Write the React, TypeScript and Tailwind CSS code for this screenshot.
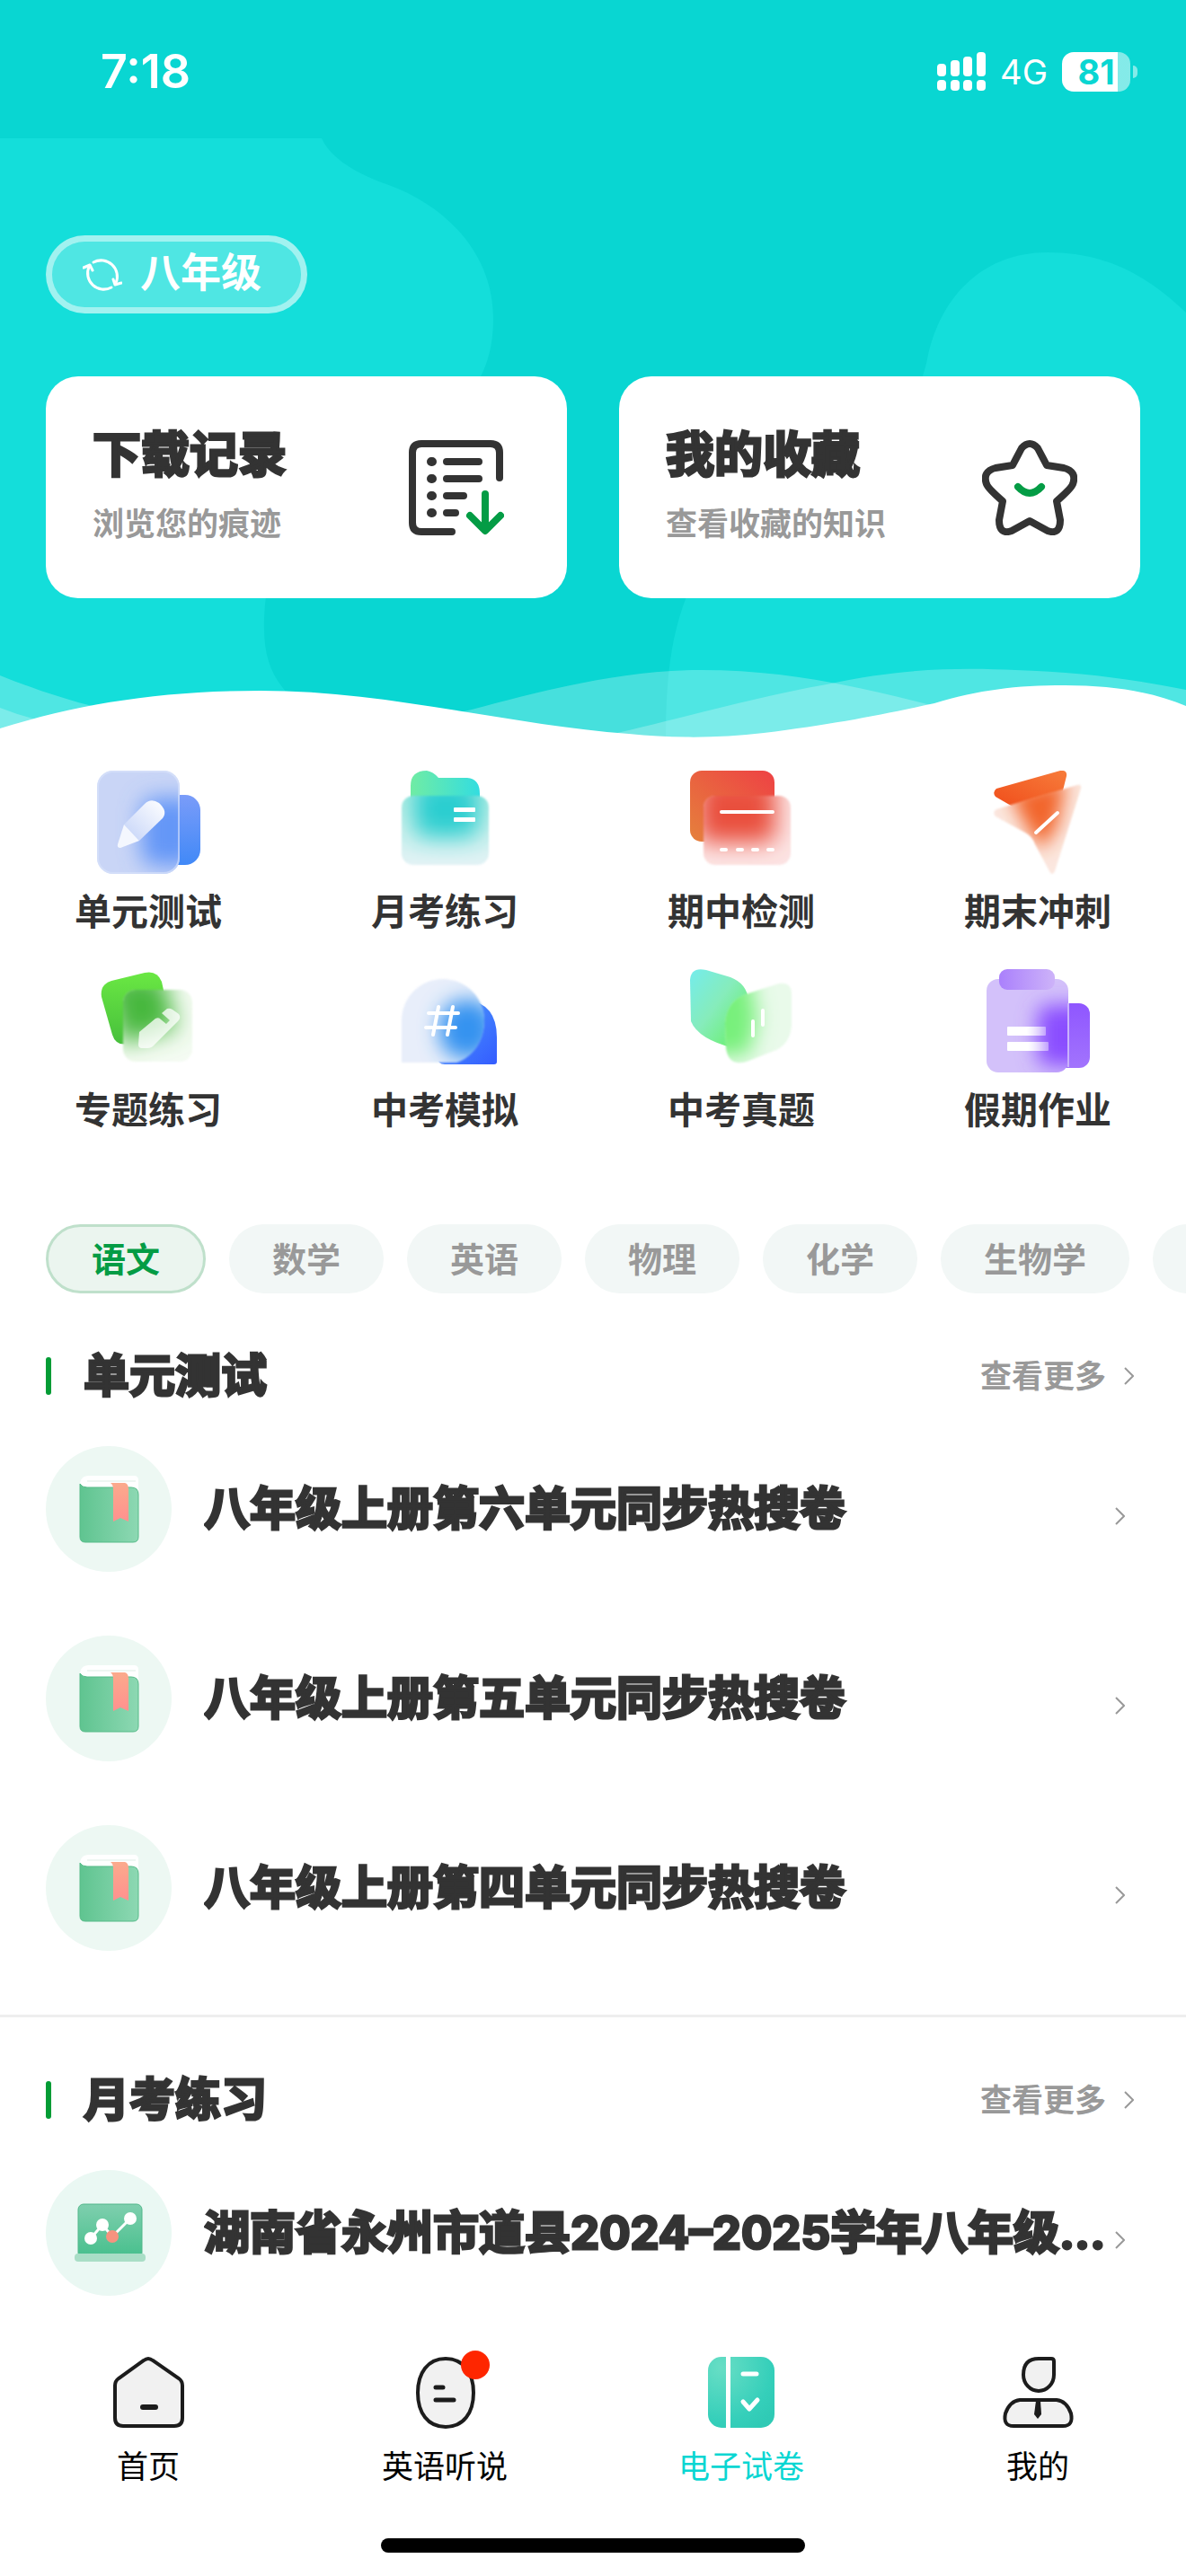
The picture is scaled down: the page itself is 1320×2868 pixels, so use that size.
import React from 'react';

const FONT = "font-['Inter','Noto_Sans_CJK_SC',sans-serif]";
const HEAVY = 'font-bold text-[#333] [-webkit-text-stroke:3px_#333]';

const HeroBackground = () => (
  <svg
    className="absolute inset-0 w-full h-full"
    viewBox="0 0 1320 822"
    preserveAspectRatio="none"
    aria-hidden="true"
  >
    <rect width="1320" height="822" fill="#09d6d2" />
    <path
      d="M0 154H358C366 172 388 190 430 205C500 230 549 285 549 355C549 470 450 480 380 530C310 580 294 640 294 700C294 735 305 757 323 775L0 822Z"
      fill="#14deda"
    />
    <path
      d="M1320 348C1280 310 1235 281 1166 281C1090 281 1045 335 1032 400C1005 530 840 540 780 630C750 685 741 740 741 822H1320Z"
      fill="#14deda"
    />
    <path
      d="M0 752C35 766 70 778 110 788C250 822 390 822 525 790C600 770 690 746 780 746C880 746 960 766 1040 786L1320 822H0Z"
      fill="#fff"
      fillOpacity="0.25"
    />
    <path
      d="M0 788Q20 796 40 801L300 822H660C760 800 830 778 920 762C1010 742 1080 744 1130 746C1200 748 1260 756 1320 768V822H0Z"
      fill="#fff"
      fillOpacity="0.25"
    />
    <path
      d="M0 811C90 783 180 769 290 769C430 769 560 806 700 817C750 822 800 822 850 816C930 806 980 796 1040 783C1090 768 1130 763 1185 763C1240 763 1285 771 1320 786V822H0Z"
      fill="#fff"
    />
  </svg>
);

const StatusBar = () => (
  <div className="relative flex items-center justify-between h-[154px] pl-[112px] pr-[54px] pt-[6px] text-white">
    <span className="text-[52px] leading-[56px] font-semibold">7:18</span>
    <div className="flex items-center">
      <svg className="w-[54px] h-[44px]" viewBox="0 0 54 44" fill="#fff" aria-hidden="true">
        <rect x="0" y="13" width="10" height="14" rx="4" />
        <rect x="15" y="9" width="10" height="18" rx="4" />
        <rect x="29" y="5" width="10" height="22" rx="4" />
        <rect x="44" y="0" width="10" height="27" rx="4" />
        <rect x="0" y="31" width="10" height="12" rx="4" />
        <rect x="15" y="31" width="10" height="12" rx="4" />
        <rect x="29" y="31" width="10" height="12" rx="4" />
        <rect x="44" y="31" width="10" height="12" rx="4" />
      </svg>
      <span className="ml-4 text-[38px] leading-[44px]">4G</span>
      <div className="ml-4 flex items-center">
        <div className="w-[76px] h-[44px] rounded-[13px] flex items-center justify-center bg-linear-to-r from-white from-82% to-white/50 to-82%">
          <span className="text-[38px] leading-[44px] font-bold text-[#09d6d2]">81</span>
        </div>
        <div className="ml-[3px] w-[5px] h-[14px] rounded-r-full bg-white/50" />
      </div>
    </div>
  </div>
);

const DownloadIcon = () => (
  <svg className="w-[106px] h-[106px]" viewBox="0 0 106 106" fill="none" strokeLinecap="round" strokeLinejoin="round" aria-hidden="true">
    <path d="M101 42V14Q101 4 91 4H14Q4 4 4 14V92Q4 102 14 102H48" stroke="#333" strokeWidth="8" />
    <path d="M25 24h1M25 43h1M25 62h1M25 81h1" stroke="#333" strokeWidth="10" />
    <path d="M42 24H78M42 43H78M42 62H61M42 81H52" stroke="#333" strokeWidth="8" />
    <path d="M85 60V100M68 84L85 101L102 84" stroke="#049c45" strokeWidth="8" />
  </svg>
);

const StarIcon = () => (
  <svg className="w-[106px] h-[106px]" viewBox="0 0 106 106" fill="none" strokeLinecap="round" strokeLinejoin="round" aria-hidden="true">
    <path
      d="M44 9Q53 -1 62 9L72 28L91 31Q106 35 101 49Q99 54 83 68L87 89Q87 106 73 101L53 90L33 101Q19 106 19 89L23 68Q7 54 5 49Q0 35 15 31L34 28Z"
      stroke="#333"
      strokeWidth="8"
    />
    <path d="M40 52Q53 66 66 52" stroke="#049c45" strokeWidth="8" />
  </svg>
);

const ICON_CLASS = 'w-[116px] h-[116px]';

const UnitTestIcon = () => (
  <svg className={ICON_CLASS} viewBox="0 0 116 116" aria-hidden="true">
    <defs>
      <linearGradient id="ut-back" x1="0" y1="0" x2="0" y2="1">
        <stop offset="0" stopColor="#7a9cf9" />
        <stop offset="1" stopColor="#4189f7" />
      </linearGradient>
      <linearGradient id="ut-pen" x1="1" y1="0" x2="0" y2="1">
        <stop offset="0" stopColor="#fff" />
        <stop offset="1" stopColor="#c3d2f8" />
      </linearGradient>
      <clipPath id="ut-clip"><rect x="1" y="0" width="92" height="115" rx="18" /></clipPath>
      <filter id="ut-blur" x="-50%" y="-50%" width="200%" height="200%"><feGaussianBlur stdDeviation="12" /></filter>
    </defs>
    <rect x="50" y="27" width="66" height="78" rx="17" fill="url(#ut-back)" />
    <rect x="1" y="0" width="92" height="115" rx="18" fill="#c9d5f6" />
    <g clipPath="url(#ut-clip)">
      <rect x="50" y="30" width="64" height="76" rx="16" fill="#5a90f7" fillOpacity="0.9" filter="url(#ut-blur)" />
    </g>
    <rect x="2" y="1" width="90" height="113" rx="17" fill="none" stroke="#dbe4fb" strokeOpacity="0.6" strokeWidth="2" />
    <path d="M31 60L54 37Q61 30 70 36Q80 45 74 53L48 78Z" fill="url(#ut-pen)" />
    <path d="M31 60L48 78L27 86Q23 86 24 82Z" fill="#f4f7fe" />
  </svg>
);

const MonthlyIcon = () => (
  <svg className={ICON_CLASS} viewBox="0 0 116 116" aria-hidden="true">
    <defs>
      <linearGradient id="mo-back" x1="0" y1="0" x2="1" y2="0">
        <stop offset="0" stopColor="#70eca4" />
        <stop offset="1" stopColor="#33dde0" />
      </linearGradient>
      <linearGradient id="mo-front" x1="0" y1="0" x2="0" y2="1">
        <stop offset="0" stopColor="#a5ecdc" />
        <stop offset="1" stopColor="#e9f3f8" />
      </linearGradient>
      <clipPath id="mo-clip"><rect x="10" y="28" width="97" height="77" rx="13" /></clipPath>
      <filter id="mo-blur" x="-50%" y="-50%" width="200%" height="200%"><feGaussianBlur stdDeviation="13" /></filter>
    </defs>
    <path d="M20 40V17Q20 0 38 0Q45 1 51 8H83Q97 9 97 26V40Z" fill="url(#mo-back)" />
    <g className="blur-[1px]">
      <g clipPath="url(#mo-clip)">
        <rect width="116" height="116" fill="url(#mo-front)" />
        <rect x="24" y="10" width="72" height="64" rx="14" fill="#2cced0" filter="url(#mo-blur)" />
      </g>
    </g>
    <rect x="68" y="41" width="24" height="5" rx="1" fill="#fff" />
    <rect x="68" y="52" width="24" height="5" rx="1" fill="#fff" />
  </svg>
);

const MidtermIcon = () => (
  <svg className={ICON_CLASS} viewBox="0 0 116 116" aria-hidden="true">
    <defs>
      <linearGradient id="mt-back" x1="0" y1="1" x2="1" y2="0">
        <stop offset="0" stopColor="#e5813c" />
        <stop offset="1" stopColor="#ee4144" />
      </linearGradient>
      <clipPath id="mt-clip"><rect x="16" y="28" width="97" height="77" rx="13" /></clipPath>
      <filter id="mt-blur" x="-50%" y="-50%" width="200%" height="200%"><feGaussianBlur stdDeviation="13" /></filter>
    </defs>
    <rect x="1" y="0" width="94" height="79" rx="13" fill="url(#mt-back)" />
    <g className="blur-[1px]">
      <g clipPath="url(#mt-clip)">
        <rect width="116" height="116" fill="#fce4e4" />
        <rect x="10" y="8" width="86" height="72" rx="12" fill="#e94f3e" filter="url(#mt-blur)" />
      </g>
    </g>
    <rect x="34" y="44" width="61" height="4" rx="2" fill="#fff" />
    <path d="M36 88h5M54 88h5M71 88h5M88 88h5" stroke="#fff" strokeWidth="4" strokeLinecap="round" />
  </svg>
);

const FinalIcon = () => (
  <svg className={ICON_CLASS} viewBox="0 0 116 116" aria-hidden="true">
    <defs>
      <linearGradient id="fi-back" x1="0" y1="1" x2="1" y2="0">
        <stop offset="0" stopColor="#f04e1b" />
        <stop offset="1" stopColor="#f77c3b" />
      </linearGradient>
      <clipPath id="fi-clip"><path d="M12 43L102 16Q107 15 106 20L77 112Q74 118 71 112L55 82Q52 73 44 69L11 51Q7 46 12 43Z" /></clipPath>
      <filter id="fi-blur" x="-50%" y="-50%" width="200%" height="200%"><feGaussianBlur stdDeviation="10" /></filter>
    </defs>
    <path d="M12 20L83 0Q91 -1 90 6L84 30L30 40L11 29Q7 24 12 20Z" fill="url(#fi-back)" />
    <g className="blur-[1px]">
      <g clipPath="url(#fi-clip)">
        <rect width="116" height="116" fill="#fbe7df" />
        <path d="M26 24L90 10L80 62L62 88L44 60Z" fill="#f2652a" filter="url(#fi-blur)" />
      </g>
    </g>
    <path d="M80 47L56 69" stroke="#fff" strokeWidth="4" strokeLinecap="round" />
  </svg>
);

const TopicIcon = () => (
  <svg className={ICON_CLASS} viewBox="0 0 116 116" aria-hidden="true">
    <defs>
      <linearGradient id="to-back" x1="0" y1="0" x2="0" y2="1">
        <stop offset="0" stopColor="#6ae843" />
        <stop offset="1" stopColor="#47bf3c" />
      </linearGradient>
      <clipPath id="to-clip"><rect x="30" y="23" width="77" height="80" rx="14" /></clipPath>
      <filter id="to-blur" x="-50%" y="-50%" width="200%" height="200%"><feGaussianBlur stdDeviation="13" /></filter>
    </defs>
    <path d="M17 13L54 4Q68 1 73 14L82 56Q84 68 74 72L36 83Q22 86 18 73L6 31Q4 17 17 13Z" fill="url(#to-back)" />
    <g className="blur-[1px]">
      <g clipPath="url(#to-clip)">
        <rect width="116" height="116" fill="#f4fbf2" />
        <path d="M10 10L74 6L90 66L28 84Z" fill="#46b83c" filter="url(#to-blur)" />
      </g>
    </g>
    <path d="M48 70L66 55Q70 53 72 56L78 61L82 57L73 49L79 44Q82 43 85 45L92 50Q95 54 91 58L65 84Q62 88 57 88H51Q47 88 47 84Z" fill="#fff" fillOpacity="0.75" />
  </svg>
);

const MockIcon = () => (
  <svg className={ICON_CLASS} viewBox="0 0 116 116" aria-hidden="true">
    <defs>
      <linearGradient id="mk-back" x1="0" y1="0" x2="1" y2="1">
        <stop offset="0" stopColor="#4da0fc" />
        <stop offset="1" stopColor="#345cff" />
      </linearGradient>
      <clipPath id="mk-clip"><path d="M10 104V57A46 46 0 0 1 102 57C102 80 89 98 71 104Z" /></clipPath>
      <filter id="mk-blur" x="-50%" y="-50%" width="200%" height="200%"><feGaussianBlur stdDeviation="11" /></filter>
    </defs>
    <path d="M50 75Q50 36 82 34Q116 38 116 76V103Q116 106 113 106H58Q50 106 50 98Z" fill="url(#mk-back)" />
    <g className="blur-[1px]">
      <g clipPath="url(#mk-clip)">
        <rect width="116" height="116" fill="#e8eefa" />
        <rect x="52" y="34" width="62" height="66" rx="28" fill="#3493f0" filter="url(#mk-blur)" />
      </g>
    </g>
    <path d="M51 42L45 73M67 42L61 73M40 49H73M37 65H70" stroke="#fff" strokeWidth="4" strokeLinecap="round" />
  </svg>
);

const RealExamIcon = () => (
  <svg className={ICON_CLASS} viewBox="0 0 116 116" aria-hidden="true">
    <defs>
      <linearGradient id="re-back" x1="0" y1="0" x2="1" y2="1">
        <stop offset="0" stopColor="#74ecec" />
        <stop offset="0.45" stopColor="#86ecbb" />
        <stop offset="1" stopColor="#62f158" />
      </linearGradient>
      <clipPath id="re-clip"><path d="M40 60Q42 34 66 27L100 16Q114 14 114 28V62Q113 82 97 90L64 103Q44 109 41 88Z" /></clipPath>
      <filter id="re-blur" x="-50%" y="-50%" width="200%" height="200%"><feGaussianBlur stdDeviation="11" /></filter>
    </defs>
    <path d="M1 12Q2 -3 19 1L46 9Q64 16 66 34V76Q64 88 50 88Q10 78 2 58Z" fill="url(#re-back)" />
    <g className="blur-[1px]">
      <g clipPath="url(#re-clip)">
        <rect width="116" height="116" fill="#e9faea" />
        <path d="M0 0L66 0L76 56L66 96L0 96Z" fill="#78f07c" filter="url(#re-blur)" />
      </g>
    </g>
    <path d="M71 58V74M82 46V62" stroke="#fff" strokeWidth="4" strokeLinecap="round" />
  </svg>
);

const HolidayIcon = () => (
  <svg className={ICON_CLASS} viewBox="0 0 116 116" aria-hidden="true">
    <defs>
      <linearGradient id="ho-tab" x1="0" y1="0" x2="1" y2="0">
        <stop offset="0" stopColor="#aa80fc" />
        <stop offset="1" stopColor="#cdb3f9" />
      </linearGradient>
      <linearGradient id="ho-back" x1="0" y1="0" x2="0" y2="1">
        <stop offset="0" stopColor="#8f56ff" />
        <stop offset="1" stopColor="#a274fd" />
      </linearGradient>
      <linearGradient id="ho-line" x1="0" y1="0" x2="1" y2="0">
        <stop offset="0.5" stopColor="#fff" />
        <stop offset="1" stopColor="#fff" stopOpacity="0.4" />
      </linearGradient>
      <clipPath id="ho-clip"><rect x="1" y="11" width="91" height="104" rx="13" /></clipPath>
      <filter id="ho-blur" x="-50%" y="-50%" width="200%" height="200%"><feGaussianBlur stdDeviation="11" /></filter>
    </defs>
    <rect x="50" y="38" width="66" height="72" rx="12" fill="url(#ho-back)" />
    <rect x="1" y="11" width="91" height="104" rx="13" fill="#d3c1fa" />
    <g clipPath="url(#ho-clip)">
      <rect x="58" y="40" width="66" height="68" rx="12" fill="#8a4dff" filter="url(#ho-blur)" />
    </g>
    <rect x="91" y="38" width="2" height="71" fill="#c9b2fb" />
    <rect x="15" y="0" width="62" height="23" rx="9" fill="url(#ho-tab)" />
    <rect x="24" y="64" width="43" height="10" rx="1" fill="url(#ho-line)" />
    <rect x="24" y="81" width="46" height="10" rx="1" fill="url(#ho-line)" />
  </svg>
);

const BookIcon = () => (
  <svg className="w-[140px] h-[140px] shrink-0" viewBox="0 0 140 140" aria-hidden="true">
    <defs>
      <linearGradient id="bk-cover" x1="0" y1="0" x2="1" y2="0">
        <stop offset="0" stopColor="#5fc490" />
        <stop offset="1" stopColor="#8dd8b3" />
      </linearGradient>
      <linearGradient id="bk-ribbon" x1="0" y1="0" x2="0" y2="1">
        <stop offset="0" stopColor="#fbaa8c" />
        <stop offset="1" stopColor="#ff918f" />
      </linearGradient>
    </defs>
    <circle cx="70" cy="70" r="70" fill="#edf8f3" />
    <path d="M38 44Q38 33 48 33H98Q103 33 103 38V52H38Z" fill="#fff" />
    <path d="M46 39H100" stroke="#eef6f2" strokeWidth="2" />
    <path d="M38 42Q40 46 46 46H95Q103 46 103 54V101Q103 107 97 107H44Q38 107 38 101Z" fill="url(#bk-cover)" stroke="#56bb88" strokeWidth="1" />
    <path d="M72 41H88Q92 42 92 48V84L83 80L75 84V48Q75 43 72 41Z" fill="url(#bk-ribbon)" />
  </svg>
);

const ChartIcon = () => (
  <svg className="w-[140px] h-[140px] shrink-0" viewBox="0 0 140 140" aria-hidden="true">
    <defs>
      <linearGradient id="ch-screen" x1="0" y1="0" x2="0" y2="1">
        <stop offset="0" stopColor="#7fcfae" />
        <stop offset="1" stopColor="#46bf8c" />
      </linearGradient>
    </defs>
    <circle cx="70" cy="70" r="70" fill="#eaf8f3" />
    <rect x="36" y="38" width="71" height="60" rx="6" fill="url(#ch-screen)" stroke="#52b78a" strokeWidth="1" />
    <rect x="32" y="93" width="79" height="9" rx="4" fill="#a9dec6" />
    <path d="M50 76L63 61L74 74L94 54" fill="none" stroke="#fff" strokeWidth="3" />
    <circle cx="50" cy="76" r="7" fill="#fff" />
    <circle cx="63" cy="61" r="7" fill="#fff" />
    <circle cx="74" cy="74" r="7" fill="#f7937f" />
    <circle cx="94" cy="54" r="7" fill="#fff" />
  </svg>
);

const Chevron = () => (
  <svg className="w-[11px] h-[20px] shrink-0" viewBox="0 0 11 20" fill="none" aria-hidden="true">
    <path d="M1 1L10 10L1 19" stroke="#999" strokeWidth="2" />
  </svg>
);

const NAV_ICON = 'w-[80px] h-[80px] overflow-visible';

const HomeIcon = () => (
  <svg className={NAV_ICON} viewBox="0 0 80 80" fill="none" aria-hidden="true">
    <path
      d="M35 4Q40 0 45 4L74 24Q78 27 78 32V68Q78 77 69 77H12Q3 77 3 68V32Q3 27 7 24Z"
      fill="#f1f1f1"
      stroke="#1c1c1c"
      strokeWidth="4"
    />
    <path d="M34 56H48" stroke="#1c1c1c" strokeWidth="6" strokeLinecap="round" />
  </svg>
);

const ListenIcon = () => (
  <svg className={NAV_ICON} viewBox="0 0 80 80" fill="none" aria-hidden="true">
    <path
      d="M41 2C61 2 72 18 72 40S61 78 41 78S10 62 10 40S21 2 41 2Z"
      fill="#f1f1f1"
      stroke="#1c1c1c"
      strokeWidth="4"
    />
    <path d="M30 34H38M30 48H50" stroke="#1c1c1c" strokeWidth="5" strokeLinecap="round" />
    <circle cx="74" cy="9" r="16" fill="#fe2600" />
  </svg>
);

const PaperIcon = () => (
  <svg className={NAV_ICON} viewBox="0 0 80 80" fill="none" aria-hidden="true">
    <defs>
      <radialGradient id="pp" cx="0.2" cy="0.15" r="1">
        <stop offset="0" stopColor="#68dec5" />
        <stop offset="0.75" stopColor="#35cfba" />
        <stop offset="1" stopColor="#2fcab5" />
      </radialGradient>
    </defs>
    <rect x="3" y="0" width="74" height="79" rx="15" fill="url(#pp)" />
    <rect x="23" y="-1" width="5" height="81" fill="#fff" />
    <path d="M42 19H57M42 50L49 58L58 48" stroke="#fff" strokeWidth="5" strokeLinecap="round" strokeLinejoin="round" />
  </svg>
);

const MineIcon = () => (
  <svg className={NAV_ICON} viewBox="0 0 80 80" fill="none" aria-hidden="true">
    <path d="M41 2H55Q58 2 58 5V20A17 18 0 0 1 24 20Q24 2 41 2Z" fill="#f1f1f1" stroke="#1c1c1c" strokeWidth="4" />
    <path d="M20 48H61Q72 49 77 63Q80 77 68 77H13Q1 77 4 63Q9 49 20 48Z" fill="#f1f1f1" stroke="#1c1c1c" strokeWidth="4" />
    <path d="M38 49H43L44 64L40 69L36 64Z" fill="#1c1c1c" />
  </svg>
);

const shortcuts = [
  { title: '下载记录', desc: '浏览您的痕迹', Icon: DownloadIcon },
  { title: '我的收藏', desc: '查看收藏的知识', Icon: StarIcon },
];

const categories = [
  { label: '单元测试', Icon: UnitTestIcon },
  { label: '月考练习', Icon: MonthlyIcon },
  { label: '期中检测', Icon: MidtermIcon },
  { label: '期末冲刺', Icon: FinalIcon },
  { label: '专题练习', Icon: TopicIcon },
  { label: '中考模拟', Icon: MockIcon },
  { label: '中考真题', Icon: RealExamIcon },
  { label: '假期作业', Icon: HolidayIcon },
];

const subjects = ['语文', '数学', '英语', '物理', '化学', '生物学', '历史'];

const sections = [
  {
    title: '单元测试',
    Icon: BookIcon,
    papers: ['八年级上册第六单元同步热搜卷', '八年级上册第五单元同步热搜卷', '八年级上册第四单元同步热搜卷'],
  },
  {
    title: '月考练习',
    Icon: ChartIcon,
    papers: ['湖南省永州市道县2024–2025学年八年级...'],
  },
];

const navItems = [
  { label: '首页', Icon: HomeIcon, active: false },
  { label: '英语听说', Icon: ListenIcon, active: false },
  { label: '电子试卷', Icon: PaperIcon, active: true },
  { label: '我的', Icon: MineIcon, active: false },
];

interface PaperSectionProps {
  title: string;
  papers: string[];
  Icon: React.FC;
}

const PaperSection: React.FC<PaperSectionProps> = ({ title, papers, Icon }) => (
  <section className="pt-16">
    <div className="flex items-center h-14 pl-[51px] pr-[58px]">
      <span className="w-[6px] h-[42px] rounded-full bg-[#049c35]" />
      <h2 className={`ml-9 text-[51px] leading-[56px] ${HEAVY}`}>{title}</h2>
      <a href="#" className="ml-auto flex items-center gap-5 text-[35px] leading-[40px] font-bold text-[#999]">
        查看更多
        <Chevron />
      </a>
    </div>
    <ul className="mt-[50px] flex flex-col gap-[71px]">
      {papers.map((paper) => (
        <li key={paper}>
          <a href="#" className="flex items-center pl-[51px] pr-[68px]">
            <Icon />
            <span className={`ml-9 flex-1 min-w-0 truncate text-[51px] leading-[64px] ${HEAVY}`}>{paper}</span>
            <span className="pt-4">
              <Chevron />
            </span>
          </a>
        </li>
      ))}
    </ul>
  </section>
);

export default function App() {
  return (
    <div className={`w-full bg-white overflow-hidden ${FONT}`}>
      <header className="relative pb-[156px]">
        <HeroBackground />
        <StatusBar />
        <div className="relative px-[51px] pt-[108px]">
          <button
            type="button"
            className="flex items-center h-[87px] pl-[34px] pr-[44px] rounded-full border-[7px] border-white/60 bg-white/25 bg-clip-padding text-white"
          >
            <svg className="w-[44px] h-[40px]" viewBox="0 0 44 40" fill="none" stroke="#fff" strokeWidth="3" strokeLinecap="round" strokeLinejoin="round" aria-hidden="true">
              <path d="M12 6A18 18 0 0 1 37 29" />
              <path d="M32 34A18 18 0 0 1 7 11" />
              <path d="M1 12L8 9L11 15" />
              <path d="M43 29L36 31L34 25" />
            </svg>
            <span className="ml-5 pb-1 text-[45px] leading-[48px] font-bold">八年级</span>
          </button>
          <div className="mt-[70px] grid grid-cols-2 gap-[58px]">
            {shortcuts.map(({ title, desc, Icon }) => (
              <a
                key={title}
                href="#"
                className="h-[247px] flex items-center justify-between pl-[52px] pr-[70px] rounded-[36px] bg-white"
              >
                <div className="pb-2">
                  <h3 className={`text-[54px] leading-[64px] ${HEAVY}`}>{title}</h3>
                  <p className="mt-6 text-[35px] leading-[40px] font-bold text-[#999]">{desc}</p>
                </div>
                <Icon />
              </a>
            ))}
          </div>
        </div>
      </header>

      <nav className="pt-9 grid grid-cols-4 gap-y-[43px]">
        {categories.map(({ label, Icon }) => (
          <a key={label} href="#" className="flex flex-col items-center gap-5">
            <Icon />
            <span className="text-[41px] leading-[42px] font-bold text-[#333]">{label}</span>
          </a>
        ))}
      </nav>

      <div role="tablist" className="mt-[106px] flex gap-[26px] pl-[51px] overflow-hidden">
        {subjects.map((subject, i) => (
          <button
            key={subject}
            type="button"
            role="tab"
            aria-selected={i === 0}
            className={`shrink-0 h-[77px] px-12 rounded-full text-[38px] leading-[48px] font-bold ${
              i === 0 ? 'border-[3px] border-[#bfe0cb] bg-[#ebf5ef] text-[#049c45]' : 'bg-[#f2f7f6] text-[#999]'
            }`}
          >
            {subject}
          </button>
        ))}
      </div>

      <PaperSection {...sections[0]} />
      <hr className="mt-[71px] border-t-[3px] border-[#eee]" />
      <PaperSection {...sections[1]} />

      <footer className="pt-[68px] pb-[25px]">
        <nav className="grid grid-cols-4">
          {navItems.map(({ label, Icon, active }) => (
            <a key={label} href="#" className="flex flex-col items-center gap-6">
              <Icon />
              <span className={`text-[35px] leading-[36px] ${active ? 'text-[#09d6d2]' : 'text-black'}`}>{label}</span>
            </a>
          ))}
        </nav>
        <div className="mt-[62px] mx-auto w-[472px] h-4 rounded-full bg-black" />
      </footer>
    </div>
  );
}
